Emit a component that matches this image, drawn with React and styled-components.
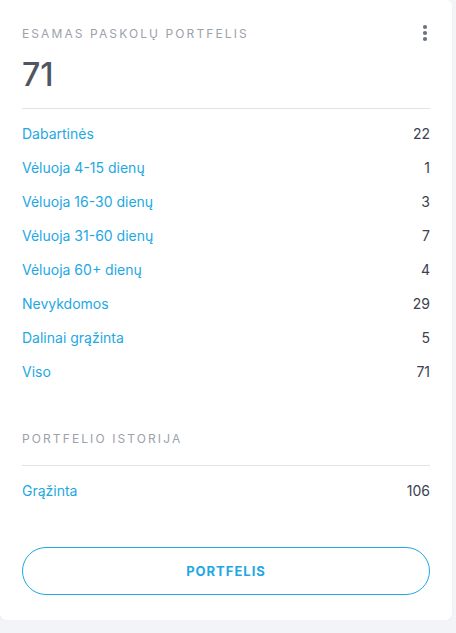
import React from "react";
import styled, { createGlobalStyle } from "styled-components";

const GlobalStyle = createGlobalStyle`
  body {
    margin: 0;
    background: #f3f4f7;
    font-family: Inter, "Noto Sans", sans-serif;
  }
`;

const current = [
  { label: "Dabartinės", value: 22 },
  { label: "Vėluoja 4-15 dienų", value: 1 },
  { label: "Vėluoja 16-30 dienų", value: 3 },
  { label: "Vėluoja 31-60 dienų", value: 7 },
  { label: "Vėluoja 60+ dienų", value: 4 },
  { label: "Nevykdomos", value: 29 },
  { label: "Dalinai grąžinta", value: 5 },
  { label: "Viso", value: 71 }
];

const history = [{ label: "Grąžinta", value: 106 }];

const MoreIcon = () => (
  <svg width="6" height="18" viewBox="0 0 6 18">
    <circle cx="3" cy="3" r="2.1" fill="#6b7280" />
    <circle cx="3" cy="9" r="2.1" fill="#6b7280" />
    <circle cx="3" cy="15" r="2.1" fill="#6b7280" />
  </svg>
);

const App = () => {
  return (
    <>
      <GlobalStyle />
      <Card>
        <Header>
          <Title>Esamas paskolų portfelis</Title>
          <MoreButton>
            <MoreIcon />
          </MoreButton>
        </Header>
        <Total>71</Total>
        <Divider />
        <List>
          {current.map(row => (
            <Row key={row.label}>
              <Label>{row.label}</Label>
              <Value>{row.value}</Value>
            </Row>
          ))}
        </List>
        <Title $top={41}>Portfelio istorija</Title>
        <Divider $top={16} />
        <List>
          {history.map(row => (
            <Row key={row.label}>
              <Label>{row.label}</Label>
              <Value>{row.value}</Value>
            </Row>
          ))}
        </List>
        <OutlineButton>Portfelis</OutlineButton>
      </Card>
    </>
  );
};

const Card = styled.div`
  width: 452px;
  height: 620px;
  box-sizing: border-box;
  padding: 24px 22px;
  background: #fff;
  border-radius: 0 6px 6px 6px;
  box-shadow: 0 1px 2px rgba(17, 24, 39, 0.06);
  display: flex;
  flex-direction: column;
`;

const Header = styled.div`
  display: flex;
  align-items: center;
  justify-content: space-between;
  height: 20px;
`;

const Title = styled.div`
  height: 20px;
  line-height: 20px;
  margin-top: ${p => p.$top || 0}px;
  font-size: 12px;
  letter-spacing: 2.1px;
  text-transform: uppercase;
  color: #9ca1aa;
`;

const MoreButton = styled.div`
  display: flex;
  align-items: center;
  margin-right: 2px;
  margin-top: -2px;
`;

const Total = styled.div`
  margin-top: 11px;
  height: 40px;
  line-height: 40px;
  font-size: 32px;
  font-weight: 500;
  color: #4f5662;
`;

const Divider = styled.div`
  margin-top: ${p => p.$top || 13}px;
  border-top: 1px solid #e1e2e6;
`;

const List = styled.div`
  padding-top: 7px;
  display: flex;
  flex-direction: column;
`;

const Row = styled.div`
  display: flex;
  align-items: center;
  justify-content: space-between;
  height: 34px;
  font-size: 14px;
`;

const Label = styled.span`
  color: #1ea8e3;
`;

const Value = styled.span`
  color: #3b4250;
`;

const OutlineButton = styled.button`
  margin-top: 40px;
  height: 48px;
  width: 100%;
  border: 1px solid #1ea8e3;
  border-radius: 24px;
  background: #fff;
  color: #1ea8e3;
  font-family: Inter, "Noto Sans", sans-serif;
  font-size: 13px;
  font-weight: 700;
  letter-spacing: 1px;
  text-transform: uppercase;
`;

export default App;
